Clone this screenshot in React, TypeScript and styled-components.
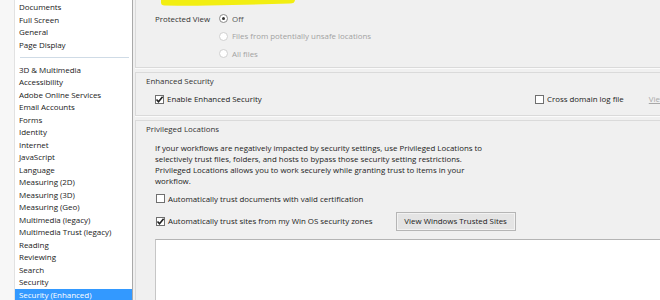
import React from "react";
import styled, { createGlobalStyle } from "styled-components";

const GlobalStyle = createGlobalStyle`
  body {
    margin: 0;
    background: #f0f0f0;
    font-family: "Open Sans", "Noto Sans", sans-serif;
    overflow: hidden;
  }
`;

const categories: (string | null)[] = [
  "Documents",
  "Full Screen",
  "General",
  "Page Display",
  null,
  "3D & Multimedia",
  "Accessibility",
  "Adobe Online Services",
  "Email Accounts",
  "Forms",
  "Identity",
  "Internet",
  "JavaScript",
  "Language",
  "Measuring (2D)",
  "Measuring (3D)",
  "Measuring (Geo)",
  "Multimedia (legacy)",
  "Multimedia Trust (legacy)",
  "Reading",
  "Reviewing",
  "Search",
  "Security",
  "Security (Enhanced)",
];

const Check = ({ on }: { on?: boolean }) => (
  <Box>
    {on ? (
      <svg width="9" height="9" viewBox="0 0 9 9">
        <path d="M1.5 4.5 L3.5 6.8 L7.6 1.8" fill="none" stroke="#222" strokeWidth="1.6" />
      </svg>
    ) : null}
  </Box>
);

const App = () => {
  return (
    <>
      <GlobalStyle />
      <Window>
        <Sidebar>
          <List>
            {categories.map((c, i) =>
              c === null ? (
                <Sep key={i} />
              ) : (
                <Item key={i} $active={c === "Security (Enhanced)"}>
                  {c}
                </Item>
              )
            )}
          </List>
        </Sidebar>
        <Main>
          <Marker width="140" height="8" viewBox="0 0 140 8">
            <path d="M0 0 H134 Q134 3 129 3.6 L60 5.2 Q20 6 3 5.6 Q0 5 0 3 Z" fill="#f2ee12" />
          </Marker>
          <Group>
            <PVGrid>
              <PVLabel>Protected View</PVLabel>
              <RadioRow>
                <Radio $on />
                <span>Off</span>
              </RadioRow>
              <span />
              <RadioRow $disabled>
                <Radio $disabled />
                <span>Files from potentially unsafe locations</span>
              </RadioRow>
              <span />
              <RadioRow $disabled>
                <Radio $disabled />
                <span>All files</span>
              </RadioRow>
            </PVGrid>
          </Group>
          <Group $top>
            <Caption>Enhanced Security</Caption>
            <EnhRow>
              <CheckRow>
                <Check on />
                <span>Enable Enhanced Security</span>
              </CheckRow>
              <Spacer />
              <CheckRow>
                <Check />
                <span>Cross domain log file</span>
              </CheckRow>
              <LinkBtn>View</LinkBtn>
            </EnhRow>
          </Group>
          <Group $top $open>
            <Caption>Privileged Locations</Caption>
            <Para>
              If your workflows are negatively impacted by security settings, use Privileged Locations to
              <br />
              selectively trust files, folders, and hosts to bypass those security setting restrictions.
              <br />
              Privileged Locations allows you to work securely while granting trust to items in your
              <br />
              workflow.
            </Para>
            <CheckRow $mt={7} $indent>
              <Check />
              <span>Automatically trust documents with valid certification</span>
            </CheckRow>
            <TrustRow>
              <CheckRow $indent>
                <Check on />
                <span>Automatically trust sites from my Win OS security zones</span>
              </CheckRow>
              <Button>View Windows Trusted Sites</Button>
            </TrustRow>
            <ListBox />
          </Group>
        </Main>
      </Window>
    </>
  );
};

export default App;

const Window = styled.div`
  display: flex;
  width: 660px;
  height: 300px;
  overflow: hidden;
`;

const Sidebar = styled.div`
  width: 118px;
  padding-left: 14px;
  background: #f7f7f7;
  border-right: 1px solid #a9a9a9;
  flex-shrink: 0;
`;

const List = styled.div`
  background: #fff;
  height: 100%;
  padding-top: 1px;
  box-sizing: border-box;
  border-left: 1px solid #e2e2e2;
`;

const Item = styled.div<{ $active?: boolean }>`
  height: 12.5px;
  line-height: 12.5px;
  font-size: 8px;
  letter-spacing: -0.05px;
  padding-left: 4px;
  white-space: nowrap;
  color: ${(p) => (p.$active ? "#fff" : "#1a1a1a")};
  background: ${(p) => (p.$active ? "#3399ff" : "transparent")};
`;

const Sep = styled.div`
  height: 12.5px;
  display: flex;
  align-items: center;
  padding: 0 3px 0 5px;
  &::after {
    content: "";
    flex: 1;
    height: 1px;
    background: #cfdbe6;
  }
`;

const Main = styled.div`
  position: relative;
  flex: 1;
  padding-left: 2px;
  display: flex;
  flex-direction: column;
  overflow: hidden;
  font-size: 7.9px;
  color: #1e1e1e;
`;

const Marker = styled.svg`
  position: absolute;
  left: 28px;
  top: 0;
`;

const Group = styled.div<{ $top?: boolean; $open?: boolean }>`
  border-left: 1px solid #dadada;
  border-top: ${(p) => (p.$top ? "1px solid #dadada" : "none")};
  border-bottom: ${(p) => (p.$open ? "none" : "1px solid #dadada")};
  box-shadow: ${(p) => (p.$open ? "none" : "0 1px 0 #fbfbfb")};
  margin-top: ${(p) => (p.$top ? "4px" : "0")};
  padding-left: 10px;
  flex-shrink: 0;
  ${(p) => (p.$open ? "flex: 1; display: flex; flex-direction: column;" : "")}
`;

const PVGrid = styled.div`
  display: grid;
  grid-template-columns: 64px auto;
  grid-auto-rows: 17.5px;
  align-items: center;
  padding: 10px 0 4px 9px;
`;

const PVLabel = styled.span`
  color: #333;
  white-space: nowrap;
`;

const RadioRow = styled.div<{ $disabled?: boolean }>`
  display: flex;
  align-items: center;
  gap: 4px;
  white-space: nowrap;
  color: ${(p) => (p.$disabled ? "#a2a2a2" : "#555")};
`;

const Radio = styled.span<{ $on?: boolean; $disabled?: boolean }>`
  width: 7px;
  height: 7px;
  border-radius: 50%;
  border: 1px solid ${(p) => (p.$disabled ? "#d0d0d0" : "#8a8a8a")};
  background: #fff;
  display: flex;
  align-items: center;
  justify-content: center;
  &::after {
    content: "";
    width: 3px;
    height: 3px;
    border-radius: 50%;
    background: ${(p) => (p.$on ? "#333" : "transparent")};
  }
`;

const Caption = styled.div`
  height: 14px;
  line-height: 14px;
  margin-top: 1px;
  color: #333;
`;

const EnhRow = styled.div`
  display: flex;
  align-items: center;
  height: 23px;
  padding: 0 0 4px 9px;
`;

const Spacer = styled.div`
  flex: 1;
`;

const CheckRow = styled.div<{ $mt?: number; $indent?: boolean }>`
  display: flex;
  align-items: center;
  gap: 3px;
  margin-top: ${(p) => p.$mt || 0}px;
  padding-left: ${(p) => (p.$indent ? "10px" : "0")};
  white-space: nowrap;
  color: #222;
`;

const Box = styled.span`
  width: 9px;
  height: 9px;
  box-sizing: border-box;
  border: 1px solid #6f6f6f;
  background: #fff;
  display: flex;
  align-items: center;
  justify-content: center;
  svg {
    flex-shrink: 0;
  }
`;

const LinkBtn = styled.span`
  margin-left: 25px;
  margin-right: -6px;
  color: #a8a8a8;
  text-decoration: underline;
  white-space: nowrap;
`;

const Para = styled.div`
  padding-left: 9px;
  margin-top: 7px;
  line-height: 11px;
  white-space: nowrap;
  color: #222;
`;

const TrustRow = styled.div`
  display: flex;
  align-items: center;
  gap: 23px;
  margin-top: 8px;
`;

const Button = styled.button`
  font: inherit;
  color: #222;
  height: 19px;
  width: 120px;
  padding: 0;
  background: #e4e4e4;
  border: 1px solid #b5b5b5;
  box-shadow: inset 0 0 0 1px #f2f2f2;
`;

const ListBox = styled.div`
  margin-top: 8px;
  margin-left: 9px;
  flex: 1;
  background: #fff;
  border-top: 1px solid #b4b4b4;
  border-left: 1px solid #c6c6c6;
`;
